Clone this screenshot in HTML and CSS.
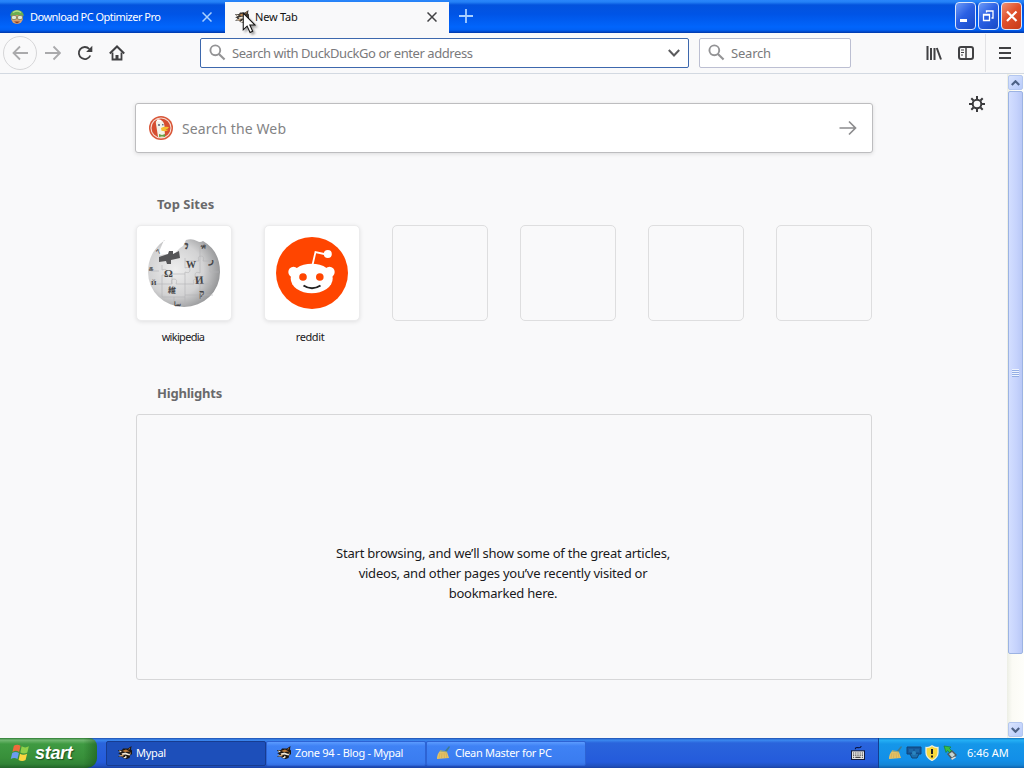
FILE: index.html
```html
<!DOCTYPE html>
<html lang="en">
<head>
    <meta charset="UTF-8">
    <meta name="viewport" content="width=device-width, initial-scale=1.0">
    <title>New Tab</title>
    <link rel="stylesheet" href="styles.css">
</head>
<body>

    <!-- Shared icons -->
    <svg class="sprite" aria-hidden="true">
        <symbol id="fox" viewBox="0 0 16 16">
            <path d="M1 5l4 0 1-1.500 5 0 3.500-2.500-.5 3.500 1 1 0 4-1.500 0-1 3.500-3 1-3.500-1-1-1.500-4 .5 2.500-2.500-2.500-1.500 2 0z" fill="#1b1612"/>
            <path d="M5 6l4-1.500 4 2-5 .5zM11 4.500l2.500-2-1 2z" fill="#c07c38"/>
            <path d="M2 5.500l3 .5-2 1.500zM4.500 8.500l4-1 5 2-1 1-4-1-3 .5zM1.500 11l2.500-1-.5 1.500zM6 12l2 0 .5-1.500 1.500 1.500-2 1.500z" fill="#f3ead8"/>
            <path d="M4 10l3-.5-1 2-2-.3zM12 8l2-.5-.5 1.500z" fill="#cd9a62"/>
        </symbol>
        <symbol id="broom" viewBox="0 0 16 16">
            <path d="M13 1l1 1-4 6-2-1z" fill="#3f7c90"/>
            <path d="M4 6l7 1 2 6-12 1q0-5 3-8z" fill="#e3c266"/>
            <path d="M4 8l-1 5M6 8l-.5 5M8 8l.5 5M10 8l1 5" stroke="#d3ab52" fill="none" stroke-width=".7"/>
            <path d="M4 5l7 1.500 0 1-7-1z" fill="#9aa77b"/>
        </symbol>
        <symbol id="glass" viewBox="0 0 18 18">
            <circle cx="6.700" cy="6.700" r="5.200" fill="none" stroke="#939395" stroke-width="2"/>
            <path d="M10.500 10.500l6 6" stroke="#939395" stroke-width="2.200"/>
        </symbol>
    </svg>

    <div class="titlebar">
        <div class="tab">
            <svg class="tab-icon" viewBox="0 0 16 16">
                <ellipse cx="8" cy="9" rx="6" ry="6" fill="#d9a06c"/>
                <path d="M1 7q1-6 7-6t7 6l-3-1-8 0z" fill="#6bb050"/>
                <path d="M4 3.500q4-3 8 0" stroke="#b5df8b" fill="none" stroke-width="1.300"/>
                <rect x="2.500" y="6.500" width="5" height="4" rx="1.500" fill="#e2ead8" stroke="#7c8050" stroke-width=".8"/>
                <rect x="8.500" y="6.500" width="5" height="4" rx="1.500" fill="#e2ead8" stroke="#7c8050" stroke-width=".8"/>
                <path d="M5 12.500h6l-3 2z" fill="#863d28"/>
            </svg>
            <span class="tab-title">Download PC Optimizer Pro</span>
            <svg class="tab-close" viewBox="0 0 10 10"><path d="M.5.5l9 9M9.500.5l-9 9"/></svg>
        </div>
        <div class="tab active">
            <svg class="tab-icon"><use href="#fox"/></svg>
            <span class="tab-title">New Tab</span>
            <svg class="tab-close" viewBox="0 0 10 10"><path d="M.5.5l9 9M9.500.5l-9 9"/></svg>
        </div>
        <svg class="new-tab" viewBox="0 0 14 14"><path d="M7 0v14M0 7h14"/></svg>
        <div class="window-buttons">
            <div class="win-btn"><svg viewBox="0 0 19 26"><path d="M4 17.500h7" stroke-width="3"/></svg></div>
            <div class="win-btn"><svg viewBox="0 0 19 26"><path d="M4.500 11.500h6v6h-6zM4 12h7" /><path d="M7.500 9.500v-1.500h6.500v7h-1.500M7 8h7"/></svg></div>
            <div class="win-btn close"><svg viewBox="0 0 19 26"><path d="M5 8.500l9.500 9.500M14.500 8.500l-9.500 9.500" stroke-width="2.200"/></svg></div>
        </div>
    </div>

    <div class="toolbar">
        <div class="nav-btn back">
            <svg viewBox="0 0 16 16" stroke="#aaaaac"><path d="M8 1.500l-6.500 6.500 6.500 6.500M1.500 8h15"/></svg>
        </div>
        <div class="nav-btn">
            <svg viewBox="0 0 16 16" stroke="#aaaaac"><path d="M8.500 1.500l6.500 6.500-6.500 6.500M15 8h-15"/></svg>
        </div>
        <div class="nav-btn">
            <svg viewBox="0 0 16 16" stroke="#414143"><path d="M13.300 10.500a6 6 0 1 1-1-6.500"/><path d="M15.300.8v6.200h-6.200z" fill="#414143" stroke="none"/></svg>
        </div>
        <div class="nav-btn">
            <svg viewBox="0 0 16 16" stroke="#414143"><path d="M.8 8.500l7.200-7 7.200 7" stroke-width="2"/><path d="M3.500 7.500v7h9v-7"/><path d="M6.500 15v-5h3v5z" fill="#414143" stroke="none"/></svg>
        </div>
        <div class="field urlbar">
            <svg class="glass"><use href="#glass"/></svg>
            <span class="url-text">Search with DuckDuckGo or enter address</span>
            <svg class="chevron" viewBox="0 0 12 8"><path d="M.8 1l5.200 5.500 5.200-5.500"/></svg>
        </div>
        <div class="field searchbar">
            <svg class="glass"><use href="#glass"/></svg>
            <span class="search-text">Search</span>
        </div>
        <div class="tools">
            <svg viewBox="0 0 16 16" stroke="#414143"><path d="M1.500 1v14M5 3v12M8.500 3v12M10.800 3l4.200 11.500"/></svg>
            <svg viewBox="0 0 16 16" stroke="#414143"><rect x="1" y="2" width="14" height="12" rx="2"/><path d="M8 2v12" stroke-width="1.500"/><path d="M3 5h3M3 7.500h3M3 10h2" stroke-width="1"/></svg>
            <div class="menu-btn">
                <svg viewBox="0 0 12 12" stroke="#414143"><path d="M0 1h12M0 6h12M0 11h12"/></svg>
            </div>
        </div>
    </div>

    <div class="content">
        <div class="page">
            <svg class="gear" viewBox="0 0 16 16">
                <circle cx="8" cy="8" r="4.300" stroke-width="2"/>
                <path d="M8 0v3M8 13v3M0 8h3M13 8h3M2.300 2.300l2.200 2.200M11.500 11.500l2.200 2.200M2.300 13.700l2.200-2.200M11.500 4.500l2.200-2.200" stroke-width="2"/>
            </svg>

            <div class="web-search">
                <svg class="duck" viewBox="0 0 24 24">
                    <circle cx="12" cy="12" r="12" fill="#d9583a"/>
                    <circle cx="12" cy="12" r="10" fill="#d64e30" stroke="#f5ddd4" stroke-width="1.100"/>
                    <path d="M7 8q-1-4 3-4 5 0 5.500 6l.5 11q-4 1.500-7-.2z" fill="#f3f2e8"/>
                    <path d="M8 4.500q3-1 4 1" stroke="#fff" fill="none" stroke-width="2"/>
                    <path d="M12 12q3-2 8-1-1 2-3.500 2.500 2 .5 3 .2-2 2.300-7 1z" fill="#f6bd2f"/>
                    <path d="M10 18l3 1 3-1v3l-3-.5-3 .5z" fill="#69a044"/>
                    <circle cx="10" cy="9" r=".9" fill="#44546c"/><circle cx="13.800" cy="8.800" r=".8" fill="#44546c"/>
                </svg>
                <span class="web-text">Search the Web</span>
                <svg class="go" viewBox="0 0 18 16"><path d="M10 1.500l6.500 6.500-6.500 6.500M16 8h-15.500"/></svg>
            </div>

            <h2 class="top-sites-title"><span>Top Sites</span></h2>
            <div class="sites">
                <div class="site">
                    <div class="tile filled">
                        <svg viewBox="0 0 72 72">
                            <defs>
                                <radialGradient id="globe" cx=".38" cy=".45" r=".65">
                                    <stop offset="0" stop-color="#eeeeee"/>
                                    <stop offset=".6" stop-color="#d2d2d3"/>
                                    <stop offset="1" stop-color="#8f9092"/>
                                </radialGradient>
                            </defs>
                            <path d="M17 3q-17 12-17 32a36 35 0 0 0 72 0q0-21-17-31-3 2-6 0-5-3-11-1l-3 6-3 2-4 4-2 2-8 0-6 1-1-3 5-12z" fill="url(#globe)"/>
                            <path d="M11 20l9-3 1-3 4 0 0 3 6-3 1 7-9 2 0 4-4 0-1-3-7 1z" fill="#565658"/>
                            <path d="M14 28v5q5-2 5 2t-5 3v9h-11M14 47h10q-2-5 2-5t2 5h9v11M37 58v10M37 58h15q-2-5 2-5t2 5h9M37 47h9q-2-5 2-5t2 5h14M37 47V35q5 2 5-2t-5-2v-10M37 24h14q-2-5 2-5t2 5h13M52 24v12q-5-2-5 2t5 2v18M62 24v11h9M14 47v13h23M3 34h8M24 47v-10h13M26 60v8M52 10v14" fill="none" stroke="#b4b4b5" stroke-width=".6"/>
                            <g fill="#444446" font-family="Liberation Serif, serif" font-weight="bold">
                                <text x="16" y="40" font-size="11">Ω</text>
                                <text x="38" y="31" font-size="10">W</text>
                                <text x="47" y="47" font-size="11" transform="rotate(-4 48 44)">И</text>
                                <text x="20" y="56" font-size="8" font-family="Noto Sans CJK JP, sans-serif" transform="rotate(5 24 53)">維</text>
                                <text x="51" y="60" font-size="10">ק</text>
                                <text x="53" y="12" font-size="8" transform="rotate(35 56 9)">ቶ</text>
                                <text x="61" y="26" font-size="10">ر</text>
                                <text x="8" y="17" font-size="7" transform="rotate(-45 10 14)">7</text>
                                <text x="1" y="34" font-size="7" transform="rotate(-8 4 31)">க</text>
                                <text x="3" y="48" font-size="7">Й</text>
                                <text x="26" y="69" font-size="6">سا</text>
                                <text x="36" y="12" font-size="8" transform="rotate(20 38 9)">วิ</text>
                            </g>
                        </svg>
                    </div>
                    <div class="site-label wiki">wikipedia</div>
                </div>
                <div class="site">
                    <div class="tile filled">
                        <svg viewBox="0 0 72 72">
                            <circle cx="36" cy="36" r="36" fill="#ff4500"/>
                            <path d="M36.500 28l3-13 11 2.500" fill="none" stroke="#fff" stroke-width="1.800"/>
                            <circle cx="51.800" cy="17" r="4" fill="#fff"/>
                            <circle cx="17.500" cy="35" r="5.200" fill="#fff"/>
                            <circle cx="53.500" cy="35" r="5.200" fill="#fff"/>
                            <ellipse cx="35.700" cy="41.500" rx="21" ry="14.800" fill="#fff"/>
                            <circle cx="27" cy="40" r="3.800" fill="#ff4500"/>
                            <circle cx="43.800" cy="40" r="3.800" fill="#ff4500"/>
                            <path d="M27.500 48.500q8.500 5.500 17 0" fill="none" stroke="#222" stroke-width="2"/>
                        </svg>
                    </div>
                    <div class="site-label">reddit</div>
                </div>
                <div class="site"><div class="tile"></div></div>
                <div class="site"><div class="tile"></div></div>
                <div class="site"><div class="tile"></div></div>
                <div class="site"><div class="tile"></div></div>
            </div>

            <h2 class="highlights-title"><span>Highlights</span></h2>
            <div class="highlights">
                <p>
                    Start browsing, and we’ll show some of the great articles,<br>
                    videos, and other pages you’ve recently visited or<br>
                    bookmarked here.
                </p>
            </div>
        </div>

        <div class="scrollbar">
            <div class="scroll-btn"><svg viewBox="0 0 9 6"><path d="M.8 5l3.700-3.700L8.200 5"/></svg></div>
            <div class="thumb"><span class="grip"></span></div>
            <div class="track"></div>
            <div class="scroll-btn"><svg viewBox="0 0 9 6"><path d="M.8 1l3.700 3.700L8.200 1"/></svg></div>
        </div>
    </div>

    <div class="taskbar">
        <div class="start">
            <svg viewBox="0 0 18 18">
                <path d="M3.500 2.500q3-2 6 0l-1.300 5.500q-3-2-6 0z" fill="#ee6b3c"/>
                <path d="M10.500 3q3 2 6.500 0l-1.400 5.500q-3 2-6.300 0z" fill="#8fd04a"/>
                <path d="M2 9q3-2 6 0l-1.300 5.500q-3-2-6 0z" fill="#6c9cf0"/>
                <path d="M9 9.600q3 2 6.400 0l-1.400 5.600q-3 2-6.300 0z" fill="#fbd640"/>
            </svg>
            <span>start</span>
        </div>
        <div class="tasks">
            <div class="task pressed"><svg><use href="#fox"/></svg><span>Mypal</span></div>
            <div class="task"><svg><use href="#fox"/></svg><span>Zone 94 - Blog - Mypal</span></div>
            <div class="task"><svg><use href="#broom"/></svg><span>Clean Master for PC</span></div>
        </div>
        <svg class="keyboard" viewBox="0 0 13 13">
            <path d="M4 3q0-2 2.500-1.500t3-1.500" fill="none" stroke="#0a1440"/>
            <rect x=".5" y="4.500" width="12" height="8" fill="#f4f4f4" stroke="#111a3c"/>
            <path d="M2 6.500h9M2 8.500h9" stroke="#111" stroke-dasharray="1 1"/>
            <path d="M2 10.500h1M4 10.500h5M10 10.500h1" stroke="#111"/>
        </svg>
        <div class="tray">
            <svg><use href="#broom"/></svg>
            <svg viewBox="0 0 16 16">
                <path d="M1 2h14v7h-14z" fill="#155a9c" stroke="#114276"/>
                <path d="M3 4h4v3h-4zM9 4h4v3h-4z" fill="#1b68a8"/>
                <path d="M4 9l2 4h5l2-4" fill="#1c6fae" stroke="#124879"/>
                <circle cx="8" cy="8" r="2" fill="#2c86c0"/>
            </svg>
            <svg viewBox="0 0 16 16">
                <path d="M8 .8q3 2 6 1.700v5q0 5-6 8-6-3-6-8v-5q3 .3 6-1.700z" fill="#f7d83b" stroke="#eef0da" stroke-width="1.300"/>
                <path d="M8 4v5M8 10.500v2" stroke="#222" stroke-width="2"/>
            </svg>
            <svg viewBox="0 0 16 16">
                <path d="M5 9l5-4 5 5-5 5z" fill="#505c62"/>
                <path d="M7 9l3-2 3 3-3 2.500z" fill="#c6d5d3"/>
                <path d="M2 1l7 1-1.500 1.500 2 2-2 2-2-2-1.500 2z" fill="#38bd43" stroke="#187b2b" stroke-width=".6"/>
                <path d="M9 13.500l4-2 1 1-4 2.500z" fill="#dce0dd"/>
            </svg>
            <span class="clock">6:46 AM</span>
        </div>
    </div>

    <!-- Mouse pointer -->
    <svg class="cursor" viewBox="0 0 13 21">
        <path d="M1 1v16l3.700-3.500 2.800 6 2.500-1.200-2.700-5.800h5z" fill="#fff" stroke="#111" stroke-width="1"/>
    </svg>

</body>
</html>
```
FILE: styles.css
```css
/* General styles */
* {
    box-sizing: border-box;
}

body {
    width: 1024px;
    height: 768px;
    margin: 0;
    overflow: hidden;
    display: flex;
    flex-direction: column;
    font-family: "Noto Sans", "Open Sans", sans-serif;
    font-size: 11px;
    color: #1a1a1c;
    background-color: #f9f9fa;
}

svg {
    display: block;
    flex: none;
    fill: none;
}

span {
    white-space: nowrap;
}

.sprite {
    width: 0;
    height: 0;
    position: absolute;
}

/* Title bar and tabs */
.titlebar {
    height: 33px;
    flex: none;
    display: flex;
    align-items: flex-end;
    background: linear-gradient(#2a86fb 0, #2481f6 2px, #0353dd 5px, #0054e6 14px, #0165fc 27px, #0160f4 30px, #0036a8 33px);
}

.tab {
    width: 225px;
    height: 31px;
    padding: 0 13px 2px 9px;
    display: flex;
    align-items: center;
    color: #fff;
}

.tab.active {
    width: 224px;
    padding-right: 12px;
    color: #111;
    background-color: #f9f9fa;
}

.tab-icon {
    width: 16px;
    height: 16px;
    margin-right: 5px;
}

.active .tab-icon {
    opacity: 0.85;
}

.tab-title {
    flex: 1;
    font-size: 11px;
    letter-spacing: -0.52px;
}

.active .tab-title {
    letter-spacing: -0.2px;
}

.tab-close {
    width: 10px;
    height: 10px;
    stroke: #a9d0ff;
    stroke-width: 1.5;
}

.active .tab-close {
    stroke: #424244;
}

.new-tab {
    width: 14px;
    height: 14px;
    margin: 0 0 10px 10px;
    stroke: #a8cfff;
    stroke-width: 1.8;
}

.window-buttons {
    display: flex;
    gap: 2px;
    margin: 0 2px 3px auto;
}

.win-btn {
    width: 21px;
    height: 28px;
    border: 1px solid #dde8fb;
    border-radius: 4px;
    background: linear-gradient(135deg, #6e9bf7, #2b60e4 45%, #1749c6);
}

.win-btn svg {
    width: 19px;
    height: 26px;
    stroke: #fff;
    stroke-width: 1.3;
}

.win-btn.close {
    background: linear-gradient(135deg, #ee9175, #e0512d 45%, #c73a18);
}

/* Navigation toolbar */
.toolbar {
    height: 41px;
    flex: none;
    display: flex;
    align-items: center;
    padding: 0 0 1px 4px;
    background-color: #f9f9fa;
    border-bottom: 1px solid #d3d9e1;
}

.nav-btn {
    width: 32px;
    height: 32px;
    display: flex;
    align-items: center;
    justify-content: center;
}

.nav-btn svg {
    width: 16px;
    height: 16px;
    stroke-width: 1.8;
}

.nav-btn.back {
    width: 34px;
    height: 34px;
    margin-left: -1px;
    border: 1px solid #d6d6d8;
    border-radius: 50%;
}

.field {
    height: 30px;
    padding-left: 8px;
    display: flex;
    align-items: center;
    border: 1px solid #bcbfd2;
    border-radius: 2px;
    background-color: #fff;
    color: #7a7a7c;
    font-size: 13px;
}

.urlbar {
    width: 489px;
    margin-left: 67px;
    padding-right: 8px;
    border-color: #3d68ad;
}

.searchbar {
    width: 152px;
    margin-left: 10px;
}

.glass {
    width: 17px;
    height: 17px;
    margin-right: 6px;
}

.url-text {
    flex: 1;
    letter-spacing: -0.43px;
}

.search-text {
    letter-spacing: -0.2px;
}

.chevron {
    width: 12px;
    height: 8px;
    stroke: #5b5b5d;
    stroke-width: 2;
}

.tools {
    margin-left: auto;
    display: flex;
    align-items: center;
}

.tools > svg {
    width: 16px;
    height: 16px;
    margin-right: 16px;
    stroke-width: 2;
}

.menu-btn {
    height: 38px;
    width: 39px;
    margin-left: -5px;
    padding-left: 13px;
    display: flex;
    align-items: center;
    border-left: 1px solid #e2e2e5;
}

.menu-btn svg {
    width: 12px;
    height: 12px;
    stroke-width: 1.8;
}

/* New tab page */
.content {
    flex: 1;
    min-height: 0;
    display: flex;
}

.page {
    position: relative;
    flex: 1;
    padding: 29px 134px 0 135px;
}

.gear {
    position: absolute;
    top: 22px;
    right: 22px;
    width: 16px;
    height: 16px;
    stroke: #3a3a3c;
}

.web-search {
    height: 50px;
    padding: 0 15px 0 13px;
    display: flex;
    align-items: center;
    background-color: #fff;
    border: 1px solid #bdbdbf;
    border-radius: 3px;
    box-shadow: 0 1px 4px rgba(0, 0, 0, 0.12);
}

.duck {
    width: 24px;
    height: 24px;
    margin-right: 9px;
}

.web-text {
    flex: 1;
    font-size: 14px;
    letter-spacing: 0.12px;
    color: #838385;
}

.go {
    width: 18px;
    height: 16px;
    stroke: #8c8c8e;
    stroke-width: 1.7;
}

h2 {
    margin: 0;
    padding-left: 22px;
    height: 20px;
    line-height: 20px;
    font-size: 13px;
    color: #69696b;
}

.top-sites-title {
    margin-top: 41px;
}

.sites {
    display: flex;
    gap: 32px;
    margin: 11px 0 0 1px;
}

.site {
    width: 96px;
    height: 122px;
}

.tile {
    height: 96px;
    display: flex;
    align-items: center;
    justify-content: center;
    border: 1px solid #dededf;
    border-radius: 5px;
}

.tile.filled {
    background-color: #fff;
    border-color: #ececed;
    box-shadow: 0 1px 4px rgba(0, 0, 0, 0.1);
}

.tile svg {
    width: 72px;
    height: 72px;
}

.site-label {
    height: 20px;
    margin: 6px 4px 0 0;
    line-height: 20px;
    text-align: center;
    letter-spacing: -0.4px;
}

.site-label.wiki {
    margin-right: 2px;
    letter-spacing: -0.7px;
}

.highlights-title {
    margin-top: 36px;
    letter-spacing: -0.2px;
}

.highlights {
    height: 266px;
    margin: 11px 1px 0;
    display: flex;
    justify-content: center;
    border: 1px solid #d7d7d8;
    border-radius: 3px;
}

.highlights p {
    margin: 128px 2px 0 0;
    font-size: 13px;
    line-height: 20px;
    letter-spacing: -0.23px;
    text-align: center;
    white-space: nowrap;
}

/* Scrollbar */
.scrollbar {
    width: 17px;
    padding: 1px;
    display: flex;
    flex-direction: column;
    background: linear-gradient(90deg, #eceee5, #fbfbf5 30%, #fefefa);
}

.scroll-btn {
    height: 15px;
    flex: none;
    display: flex;
    align-items: center;
    justify-content: center;
    background: linear-gradient(135deg, #d9e4fe, #b7cafa);
    border: 1px solid #b4c7ef;
    border-radius: 2px;
}

.scroll-btn svg {
    width: 9px;
    height: 6px;
    stroke: #4d6185;
    stroke-width: 2.2;
}

.thumb {
    height: 563px;
    margin-top: 1px;
    flex: none;
    display: flex;
    align-items: center;
    justify-content: center;
    background: linear-gradient(90deg, #d3deff, #c5d2fc 60%, #b9c8f6);
    border: 1px solid #9cb3e3;
    border-radius: 2px;
}

.grip {
    width: 7px;
    height: 8px;
    background: repeating-linear-gradient(#eef4fe 0, #eef4fe 1px, #94aee5 1px, #94aee5 2px);
}

.track {
    flex: 1;
}

/* Taskbar */
.taskbar {
    height: 30px;
    flex: none;
    display: flex;
    align-items: center;
    color: #fff;
    background: linear-gradient(#1f4fae 0, #3b8af0 2px, #2a64dc 5px, #245bdb 24px, #2050be 28px, #1941a5 30px);
}

.start {
    width: 97px;
    height: 30px;
    padding-left: 10px;
    display: flex;
    align-items: center;
    background: linear-gradient(90deg, rgba(0, 50, 0, 0) 86%, rgba(10, 60, 10, 0.4)), linear-gradient(#2b7a32 0, #72b872 2px, #3f9a42 6px, #388f3a 20px, #318336 26px, #226429 30px);
    border-radius: 0 8px 10px 0;
}

.start svg {
    width: 20px;
    height: 20px;
    margin-right: 5px;
}

.start span {
    font-family: "Liberation Sans", Arial, sans-serif;
    font-size: 18px;
    font-weight: bold;
    font-style: italic;
    line-height: 26px;
    letter-spacing: -0.3px;
    padding-bottom: 1px;
    text-shadow: 1px 1px 1px #1d4d20;
}

.tasks {
    display: flex;
    margin-left: 9px;
    padding-top: 1px;
}

.task {
    width: 160px;
    height: 25px;
    padding: 0 0 1px 9px;
    display: flex;
    align-items: center;
    border: 1px solid #2d63d4;
    border-radius: 2px;
    background: linear-gradient(#5c9cff 0, #3f82f5 4px, #3a7cf0 20px, #3571e4);
}

.task span {
    padding-bottom: 1px;
    letter-spacing: -0.3px;
}

.task.pressed {
    padding-left: 10px;
    border-color: #173c90;
    background: #1d4fba;
}

.task svg {
    width: 16px;
    height: 16px;
    margin-right: 3px;
}

.keyboard {
    width: 14px;
    height: 14px;
    margin: 0 13px 0 auto;
}

.tray {
    width: 146px;
    height: 30px;
    padding-left: 9px;
    display: flex;
    align-items: center;
    border-left: 1px solid #123f91;
    background: linear-gradient(#1673bd 0, #25b1f5 2px, #1597e9 6px, #128fe8 22px, #1585d6 27px, #0d62ad 30px);
}

.tray svg {
    width: 16px;
    height: 16px;
    margin-right: 2px;
}

.clock {
    margin-left: 7px;
    padding-bottom: 2px;
}

.cursor {
    position: absolute;
    left: 242px;
    top: 12px;
    width: 14px;
    height: 22px;
    filter: drop-shadow(2px 2px 1px rgba(0, 0, 0, 0.35));
}
```
